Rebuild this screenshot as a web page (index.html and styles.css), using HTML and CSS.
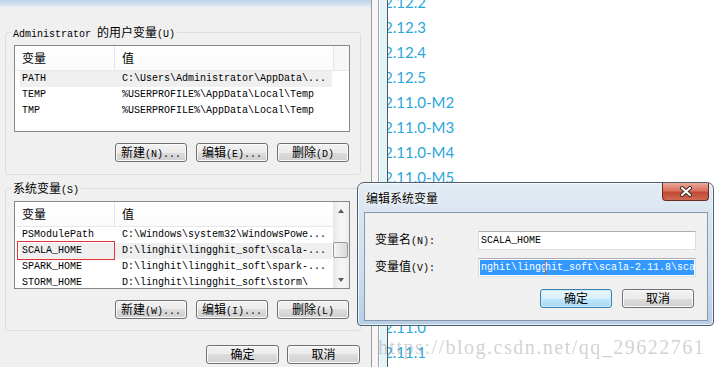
FILE: index.html
```html
<!DOCTYPE html>
<html>
<head>
    <meta charset="utf-8">
    <link rel="stylesheet" href="styles.css">
</head>
<body>
<div class="desk">

    <div class="envdlg">
        <div class="topbar"></div>

        <div class="group">
            <div class="group-title">Administrator <span class="z">的用户变量</span>(U)</div>
            <div class="list">
                <div class="list-main">
                    <div class="list-head">
                        <div class="h1"><span class="z">变量</span></div>
                        <div class="h2"><span class="z">值</span></div>
                        <div class="h3"></div>
                    </div>
                    <div class="row sel"><div class="c1">PATH</div><div class="c2">C:\Users\Administrator\AppData\...</div></div>
                    <div class="row"><div class="c1">TEMP</div><div class="c2">%USERPROFILE%\AppData\Local\Temp</div></div>
                    <div class="row"><div class="c1">TMP</div><div class="c2">%USERPROFILE%\AppData\Local\Temp</div></div>
                </div>
            </div>
            <div class="btns">
                <button class="btn"><span class="z">新建</span>(N)...</button>
                <button class="btn"><span class="z">编辑</span>(E)...</button>
                <button class="btn"><span class="z">删除</span>(D)</button>
            </div>
        </div>

        <div class="group second">
            <div class="group-title"><span class="z">系统变量</span>(S)</div>
            <div class="list tall">
                <div class="list-main">
                    <div class="list-head">
                        <div class="h1"><span class="z">变量</span></div>
                        <div class="h2 fill"><span class="z">值</span></div>
                    </div>
                    <div class="row"><div class="c1">PSModulePath</div><div class="c2">C:\Windows\system32\WindowsPowe...</div></div>
                    <div class="row sel marked"><div class="c1">SCALA_HOME</div><div class="c2">D:\linghit\lingghit_soft\scala-...</div></div>
                    <div class="row"><div class="c1">SPARK_HOME</div><div class="c2">D:\linghit\lingghit_soft\spark-...</div></div>
                    <div class="row"><div class="c1">STORM_HOME</div><div class="c2">D:\linghit\lingghit_soft\storm\</div></div>
                </div>
                <div class="vscroll">
                    <div class="sb-btn"><i class="arrow up"></i></div>
                    <div class="sb-track"><div class="sb-thumb"></div></div>
                    <div class="sb-btn"><i class="arrow down"></i></div>
                </div>
            </div>
            <div class="btns">
                <button class="btn"><span class="z">新建</span>(W)...</button>
                <button class="btn"><span class="z">编辑</span>(I)...</button>
                <button class="btn"><span class="z">删除</span>(L)</button>
            </div>
        </div>

        <div class="btns bottom">
            <button class="btn wide"><span class="z">确定</span></button>
            <button class="btn wide"><span class="z">取消</span></button>
        </div>
    </div>

    <div class="side-frame"></div>

    <div class="page">
        <ul class="versions">
            <li>2.12.2</li>
            <li>2.12.3</li>
            <li>2.12.4</li>
            <li>2.12.5</li>
            <li>2.11.0-M2</li>
            <li>2.11.0-M3</li>
            <li>2.11.0-M4</li>
            <li>2.11.0-M5</li>
            <li>2.11.0-M6</li>
            <li>2.11.0-M7</li>
            <li>2.11.0-M8</li>
            <li>2.11.0-RC1</li>
            <li>2.11.0-RC3</li>
            <li>2.11.0</li>
            <li>2.11.1</li>
        </ul>
    </div>

    <!-- edit dialog floats over both windows -->
    <div class="editdlg">
        <div class="titlebar">
            <span class="z title">编辑系统变量</span>
            <div class="close">
                <svg width="16" height="11" viewBox="0 0 16 11">
                    <path d="M4 2 L12 9 M12 2 L4 9" stroke="#3b2420" stroke-width="4" stroke-linecap="round"/>
                    <path d="M4 2 L12 9 M12 2 L4 9" stroke="#ffffff" stroke-width="2.2" stroke-linecap="round"/>
                </svg>
            </div>
        </div>
        <div class="client">
            <div class="field">
                <div class="label"><span class="z">变量名</span>(N):</div>
                <div class="input"><span class="txt">SCALA_HOME</span></div>
            </div>
            <div class="field">
                <div class="label"><span class="z">变量值</span>(V):</div>
                <div class="input"><span class="hl">nghit\lingg<i class="caret"></i>hit_soft\scala-2.11.8\scala-2.11.8</span></div>
            </div>
            <div class="dlg-btns">
                <button class="btn def"><span class="z">确定</span></button>
                <button class="btn"><span class="z">取消</span></button>
            </div>
        </div>
    </div>

    <div class="watermark">https://blog.csdn.net/qq_29622761</div>
</div>
</body>
</html>
```

FILE: styles.css
```css
body {
    margin: 0;
    padding: 0;
    background: #fff;
}
.desk {
    position: relative;
    display: flex;
    width: 719px;
    height: 367px;
    overflow: hidden;
    font-family: "Liberation Mono", "Noto Sans CJK SC", monospace;
    font-size: 10px;
    color: #000;
}
.z {
    font-family: "Noto Sans CJK SC", sans-serif;
    font-size: 12px;
}

/* environment variables window */
.envdlg {
    width: 372px;
    height: 367px;
    box-sizing: border-box;
    background: #f0f0f0;
    border-right: 1px solid #9b9b9b;
    flex-shrink: 0;
}
.topbar {
    height: 7px;
    background: linear-gradient(#bcd3ea, #e2ebf4);
}
.group {
    margin: 25px 0 0 5px;
    width: 356px;
    box-sizing: border-box;
    border: 1px solid #d5dfe5;
    border-radius: 3px;
    padding: 0 10px 12px 8px;
}
.group.second {
    margin-top: 13px;
    padding-bottom: 11px;
}
.group-title {
    width: fit-content;
    height: 14px;
    line-height: 14px;
    margin: -8px 0 0 -3px;
    padding: 0 2px;
    background: #f0f0f0;
    white-space: nowrap;
}
.list {
    margin-top: 6px;
    width: 336px;
    height: 87px;
    box-sizing: border-box;
    border: 1px solid #828790;
    background: #fff;
    display: flex;
    overflow: hidden;
}
.list.tall {
    height: 88px;
}
.list-main {
    flex: 1;
    overflow: hidden;
}
.list-head {
    display: flex;
    height: 25px;
    box-sizing: border-box;
    border-bottom: 1px solid #e8e8e8;
    background: linear-gradient(#ffffff, #fbfbfb);
}
.list-head > div {
    box-sizing: border-box;
    padding: 5px 0 0 7px;
    line-height: 14px;
}
.h1 {
    width: 100px;
    border-right: 1px solid #e3e6ea;
}
.h2 {
    width: 219px;
    border-right: 1px solid #e3e6ea;
}
.h2.fill {
    flex: 1;
    border-right: none;
}
.h3 {
    flex: 1;
    background: #f7f7f7;
}
.row {
    position: relative;
    display: flex;
    margin-left: 5px;
    width: 312px;
    height: 16px;
    line-height: 16px;
    white-space: nowrap;
}
.row.sel {
    background: #efefef;
}
.row.marked::after {
    content: "";
    position: absolute;
    left: -3px;
    top: -2px;
    width: 98px;
    height: 19px;
    box-sizing: border-box;
    border: 1px solid #e4343a;
}
.c1 {
    width: 102px;
    box-sizing: border-box;
    padding-left: 2px;
}
.c2 {
    flex: 1;
}

/* scrollbar */
.vscroll {
    width: 16px;
    display: flex;
    flex-direction: column;
    background: linear-gradient(to right, #e7e7e7, #f4f4f4 40%, #f4f4f4 70%, #ececec);
}
.sb-btn {
    height: 17px;
    display: flex;
    align-items: center;
    justify-content: center;
}
.sb-track {
    flex: 1;
}
.sb-thumb {
    margin: 23px 1px 0 0;
    height: 16px;
    box-sizing: border-box;
    border: 1px solid #979797;
    border-radius: 2px;
    background: linear-gradient(to right, #f5f5f5, #e6e6e6 50%, #d9d9d9);
}
.arrow {
    width: 0;
    height: 0;
    border-left: 3.5px solid transparent;
    border-right: 3.5px solid transparent;
}
.arrow.up {
    border-bottom: 4px solid #5c5c5c;
}
.arrow.down {
    border-top: 4px solid #5c5c5c;
}

/* buttons */
.btns {
    display: flex;
    justify-content: flex-end;
    gap: 9px;
    margin: 11px 1px 0 0;
}
.btns.bottom {
    margin: 14px 11px 0 0;
    gap: 8px;
}
.btn {
    width: 72px;
    height: 19px;
    padding: 0;
    box-sizing: border-box;
    border: 1px solid #707070;
    border-radius: 3px;
    background: linear-gradient(#f2f2f2 0%, #ebebeb 50%, #dddddd 50%, #cfcfcf 100%);
    box-shadow: inset 0 0 0 1px #fbfbfb;
    font-family: "Liberation Mono", "Noto Sans CJK SC", monospace;
    font-size: 10px;
    line-height: 15px;
    color: #000;
    white-space: nowrap;
}
.btn.wide {
    width: 73px;
}
.btn.def {
    border-color: #3c7fb1;
    background: linear-gradient(#eaf6fd 0%, #d9f0fc 50%, #bee6fd 50%, #a7d9f5 100%);
    box-shadow: inset 0 0 0 1px #c9ecfd;
}

/* window frame between dialog and browser */
.side-frame {
    width: 16px;
    flex-shrink: 0;
    background: linear-gradient(to right, #f6f6f6 0 6px, #a3a3a3 6px 7px, #fbfbfb 7px 8px, #e2f4f8 8px 15px, #565656 15px 16px);
}

/* browser page */
.page {
    flex: 1;
    overflow: hidden;
    background: #fff;
}
.versions {
    list-style: none;
    margin: -10px 0 0 -4px;
    padding: 0;
}
.versions li {
    font-family: Lato, sans-serif;
    font-size: 15px;
    line-height: 25px;
    color: #2aa6dc;
}

/* edit dialog */
.editdlg {
    position: absolute;
    left: 357px;
    top: 182px;
    width: 357px;
    height: 144px;
    box-sizing: border-box;
    border: 1px solid #4f5f70;
    border-radius: 7px 7px 4px 4px;
    padding: 0 5px 4px 6px;
    display: flex;
    flex-direction: column;
    background: linear-gradient(#e4ecf4 0%, #dae6f1 20%, #cfdff0 60%, #b6cee7 100%);
    box-shadow: inset 0 0 0 1px rgba(255, 255, 255, 0.65);
}
.titlebar {
    height: 29px;
    display: flex;
    align-items: center;
    padding-left: 2px;
}
.title {
    text-shadow: 0 0 5px #fff, 0 0 3px #fff;
}
.close {
    margin: 0 -1px 0 auto;
    align-self: flex-start;
    width: 47px;
    height: 18px;
    box-sizing: border-box;
    border: 1px solid #6a2a20;
    border-top: none;
    border-radius: 0 0 4px 4px;
    background: linear-gradient(#e9a99a 0%, #d9735f 45%, #c24a33 55%, #cf6a52 100%);
    display: flex;
    align-items: center;
    justify-content: center;
}
.client {
    height: 109px;
    box-sizing: border-box;
    border: 1px solid #8796a8;
    background: #f0f0f0;
    padding: 18px 11px 12px 10px;
    display: flex;
    flex-direction: column;
    gap: 8px;
}
.field {
    display: flex;
    align-items: center;
    height: 19px;
}
.label {
    width: 103px;
    line-height: 14px;
}
.input {
    width: 218px;
    height: 19px;
    box-sizing: border-box;
    border: 1px solid #dbdfe6;
    border-top-color: #abadb3;
    background: #fff;
    overflow: hidden;
    white-space: nowrap;
}
.txt {
    display: block;
    padding-left: 2px;
    line-height: 17px;
}
.hl {
    display: block;
    margin: 1px;
    height: 15px;
    line-height: 15px;
    padding-left: 1px;
    background: #3399ff;
    color: #fff;
    overflow: hidden;
}
.caret {
    display: inline-block;
    width: 1px;
    height: 15px;
    margin: 0 -1px 0 -2px;
    vertical-align: top;
    background: #b5651d;
}
.dlg-btns {
    display: flex;
    justify-content: flex-end;
    gap: 10px;
    margin: 4px 2px 0 0;
}

.watermark {
    position: absolute;
    left: 378px;
    top: 335px;
    font-family: "Liberation Serif", serif;
    font-size: 20px;
    line-height: 24px;
    letter-spacing: 1.5px;
    color: rgba(140, 140, 140, 0.4);
    white-space: nowrap;
}
```
